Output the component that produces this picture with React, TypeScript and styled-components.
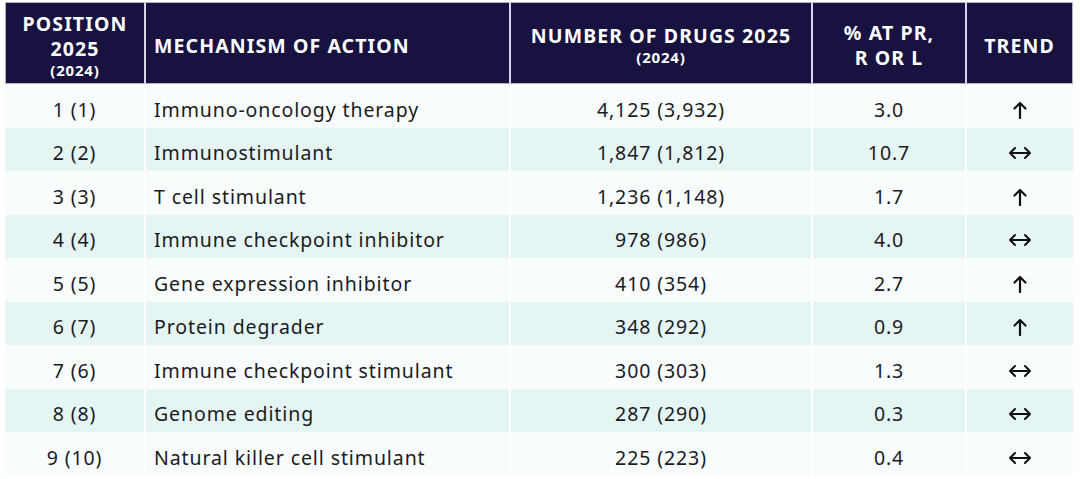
import React from "react";
import styled, { createGlobalStyle } from "styled-components";

const GlobalStyle = createGlobalStyle`
  body {
    margin: 0;
    background: #ffffff;
    font-family: "Noto Sans", "Open Sans", sans-serif;
    color: #1b1b1f;
  }
`;

type Trend = "up" | "flat";

interface Row {
  pos: string;
  moa: string;
  drugs: string;
  pct: string;
  trend: Trend;
}

const rows: Row[] = [
  { pos: "1 (1)", moa: "Immuno-oncology therapy", drugs: "4,125 (3,932)", pct: "3.0", trend: "up" },
  { pos: "2 (2)", moa: "Immunostimulant", drugs: "1,847 (1,812)", pct: "10.7", trend: "flat" },
  { pos: "3 (3)", moa: "T cell stimulant", drugs: "1,236 (1,148)", pct: "1.7", trend: "up" },
  { pos: "4 (4)", moa: "Immune checkpoint inhibitor", drugs: "978 (986)", pct: "4.0", trend: "flat" },
  { pos: "5 (5)", moa: "Gene expression inhibitor", drugs: "410 (354)", pct: "2.7", trend: "up" },
  { pos: "6 (7)", moa: "Protein degrader", drugs: "348 (292)", pct: "0.9", trend: "up" },
  { pos: "7 (6)", moa: "Immune checkpoint stimulant", drugs: "300 (303)", pct: "1.3", trend: "flat" },
  { pos: "8 (8)", moa: "Genome editing", drugs: "287 (290)", pct: "0.3", trend: "flat" },
  { pos: "9 (10)", moa: "Natural killer cell stimulant", drugs: "225 (223)", pct: "0.4", trend: "flat" },
];

function TrendIcon({ trend }: { trend: Trend }) {
  if (trend === "up") {
    return (
      <svg width="14" height="18" viewBox="0 0 14 18">
        <path d="M7 17V2M1.5 7.5L7 2l5.5 5.5" fill="none" stroke="#111" strokeWidth="2.2" strokeLinecap="round" strokeLinejoin="round" />
      </svg>
    );
  }
  return (
    <svg width="24" height="14" viewBox="0 0 24 14">
      <path d="M2 7h20M7 2L2 7l5 5M17 2l5 5-5 5" fill="none" stroke="#111" strokeWidth="2" strokeLinecap="round" strokeLinejoin="round" />
    </svg>
  );
}

export default function App() {
  return (
    <>
      <GlobalStyle />
      <Page>
        <Table>
          <colgroup>
            <col style={{ width: 141 }} />
            <col style={{ width: 365 }} />
            <col style={{ width: 302 }} />
            <col style={{ width: 154 }} />
            <col style={{ width: 106 }} />
          </colgroup>
          <thead>
            <tr>
              <Th>
                POSITION
                <br />
                2025
                <Sub>(2024)</Sub>
              </Th>
              <Th align="left">MECHANISM OF ACTION</Th>
              <Th>
                NUMBER OF DRUGS 2025
                <Sub>(2024)</Sub>
              </Th>
              <Th>
                % AT PR,
                <br />
                R OR L
              </Th>
              <Th>TREND</Th>
            </tr>
          </thead>
          <tbody>
            {rows.map((r, i) => (
              <Tr key={r.pos} striped={i % 2 === 1}>
                <Td>{r.pos}</Td>
                <Td align="left">{r.moa}</Td>
                <Td>{r.drugs}</Td>
                <Td>{r.pct}</Td>
                <Td>
                  <IconWrap>
                    <TrendIcon trend={r.trend} />
                  </IconWrap>
                </Td>
              </Tr>
            ))}
          </tbody>
        </Table>
      </Page>
    </>
  );
}

const Page = styled.div`
  padding: 2px 0 0 5px;
`;

const Table = styled.table`
  border-collapse: separate;
  border-spacing: 0;
  table-layout: fixed;
  width: 1068px;
`;

const Th = styled.th<{ align?: string }>`
  background: #17123f;
  color: #ffffff;
  font-weight: 700;
  font-size: 19.5px;
  line-height: 25px;
  letter-spacing: 1.1px;
  height: 82px;
  box-sizing: border-box;
  padding: 4px 6px 0;
  text-align: ${({ align }) => align || "center"};
  border-top: 1px solid #b4b0cc;
  border-bottom: 1px solid #b4b0cc;
  border-right: 2px solid #d8d6e6;

  &:first-child {
    border-left: 1px solid #b4b0cc;
  }
  &:last-child {
    border-right: 1px solid #b4b0cc;
  }
  &:nth-child(2) {
    padding-left: 8px;
  }
`;

const Sub = styled.div`
  font-size: 15px;
  line-height: 19px;
  font-weight: 700;
  letter-spacing: 0.8px;
`;

const Tr = styled.tr<{ striped: boolean }>`
  background: ${({ striped }) => (striped ? "#e5f5f4" : "#f8fcfc")};
`;

const Td = styled.td<{ align?: string }>`
  height: 43.5px;
  box-sizing: border-box;
  padding: 7px 8px 0;
  font-size: 19.5px;
  letter-spacing: 0.9px;
  text-align: ${({ align }) => align || "center"};
  border-right: 2px solid #ffffff;
  vertical-align: middle;

  &:last-child {
    border-right: none;
    padding-top: 3px;
  }
`;

const IconWrap = styled.span`
  display: inline-flex;
  align-items: center;
  justify-content: center;
  vertical-align: middle;
`;
